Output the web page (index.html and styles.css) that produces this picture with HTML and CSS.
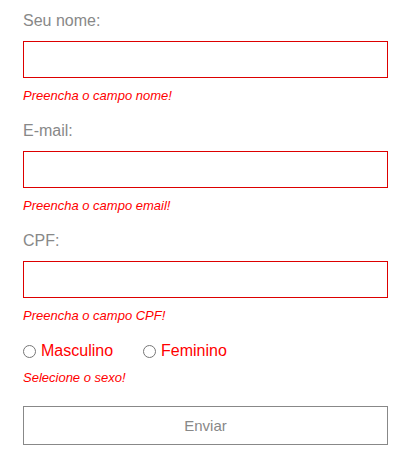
FILE: index.html
```html
<!DOCTYPE html>
<html lang="pt-BR">
<head>
<meta charset="utf-8">
<link rel="stylesheet" href="styles.css">
</head>
<body>
<form class="form">
  <div class="field">
    <label class="label" for="nome">Seu nome:</label>
    <input class="input" id="nome" type="text">
    <p class="error">Preencha o campo nome!</p>
  </div>
  <div class="field">
    <label class="label" for="email">E-mail:</label>
    <input class="input" id="email" type="text">
    <p class="error">Preencha o campo email!</p>
  </div>
  <div class="field">
    <label class="label" for="cpf">CPF:</label>
    <input class="input" id="cpf" type="text">
    <p class="error">Preencha o campo CPF!</p>
  </div>
  <div class="radios">
    <label class="radio"><input type="radio" name="sexo" class="radio-input">Masculino</label>
    <label class="radio"><input type="radio" name="sexo" class="radio-input">Feminino</label>
  </div>
  <p class="error">Selecione o sexo!</p>
  <button type="button" class="submit">Enviar</button>
</form>
</body>
</html>
```
FILE: styles.css
```css
html, body {
  margin: 0;
  padding: 0;
  background: #fff;
}
body {
  font-family: "Liberation Sans", Arial, sans-serif;
}
.form {
  width: 365px;
  padding: 12px 0 0 23px;
  display: flex;
  flex-direction: column;
}
.field {
  display: flex;
  flex-direction: column;
  margin-bottom: 19px;
}
.label {
  font-size: 16px;
  line-height: 18px;
  color: #888;
  margin-bottom: 11px;
}
.input {
  box-sizing: border-box;
  width: 365px;
  height: 37px;
  margin: 0;
  border: 1px solid #dd0000;
  outline: none;
  background: #fff;
  padding: 0 8px;
}
.error {
  margin: 10px 0 0;
  font-size: 13px;
  line-height: 15px;
  font-style: italic;
  color: #ff0000;
}
.radios {
  display: flex;
  gap: 30px;
  height: 18px;
  align-items: center;
}
.radio {
  display: flex;
  align-items: center;
  font-size: 16px;
  line-height: 18px;
  color: #ff0000;
}
.radio-input {
  margin: 0 5px 0 0;
  width: 13px;
  height: 13px;
}
.radios + .error {
  margin-top: 10px;
}
.submit {
  box-sizing: border-box;
  margin-top: 21px;
  width: 365px;
  height: 39px;
  border: 1px solid #888;
  background: #fff;
  color: #888;
  font-family: "Liberation Sans", Arial, sans-serif;
  font-size: 15px;
  padding: 0;
}
```
